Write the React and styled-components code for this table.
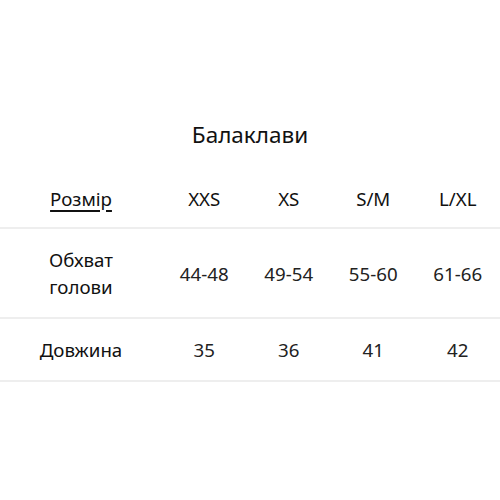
import React from 'react';
import styled, { createGlobalStyle } from 'styled-components';

const GlobalStyle = createGlobalStyle`
  html, body {
    margin: 0;
    padding: 0;
    background: #ffffff;
  }
  body {
    font-family: "Noto Sans", "Open Sans", sans-serif;
    color: #1a1a1a;
  }
`;

const Page = styled.div`
  width: 500px;
  padding-top: 118px;
`;

const Title = styled.h2`
  margin: 0 0 17px;
  font-size: 22.5px;
  font-weight: 400;
  line-height: 34px;
  text-align: center;
  color: #111;
`;

const Row = styled.div`
  display: grid;
  grid-template-columns: 162px repeat(4, 1fr);
  align-items: center;
  height: ${({ $height }) => $height}px;
  border-bottom: 2px solid #eeeeee;
`;

const Cell = styled.div`
  font-size: 18.7px;
  line-height: 27px;
  text-align: center;
  color: ${({ $label }) => ($label ? '#111' : '#222')};
`;

const SizeLink = styled.span`
  text-decoration: underline;
  text-decoration-thickness: 1.5px;
  text-underline-offset: 4px;
`;

const sizes = ['XXS', 'XS', 'S/M', 'L/XL'];
const rows = [
  { label: ['Обхват', 'голови'], values: ['44-48', '49-54', '55-60', '61-66'], height: 88 },
  { label: ['Довжина'], values: ['35', '36', '41', '42'], height: 61 },
];

export default function App() {
  return (
    <>
      <GlobalStyle />
      <Page>
        <Title>Балаклави</Title>
        <Row $height={58}>
          <Cell $label><SizeLink>Розмір</SizeLink></Cell>
          {sizes.map((s) => (
            <Cell key={s} $label>{s}</Cell>
          ))}
        </Row>
        {rows.map((r) => (
          <Row key={r.label[0]} $height={r.height}>
            <Cell $label>
              {r.label.map((l, i) => (
                <div key={i}>{l}</div>
              ))}
            </Cell>
            {r.values.map((v) => (
              <Cell key={v}>{v}</Cell>
            ))}
          </Row>
        ))}
      </Page>
    </>
  );
}
